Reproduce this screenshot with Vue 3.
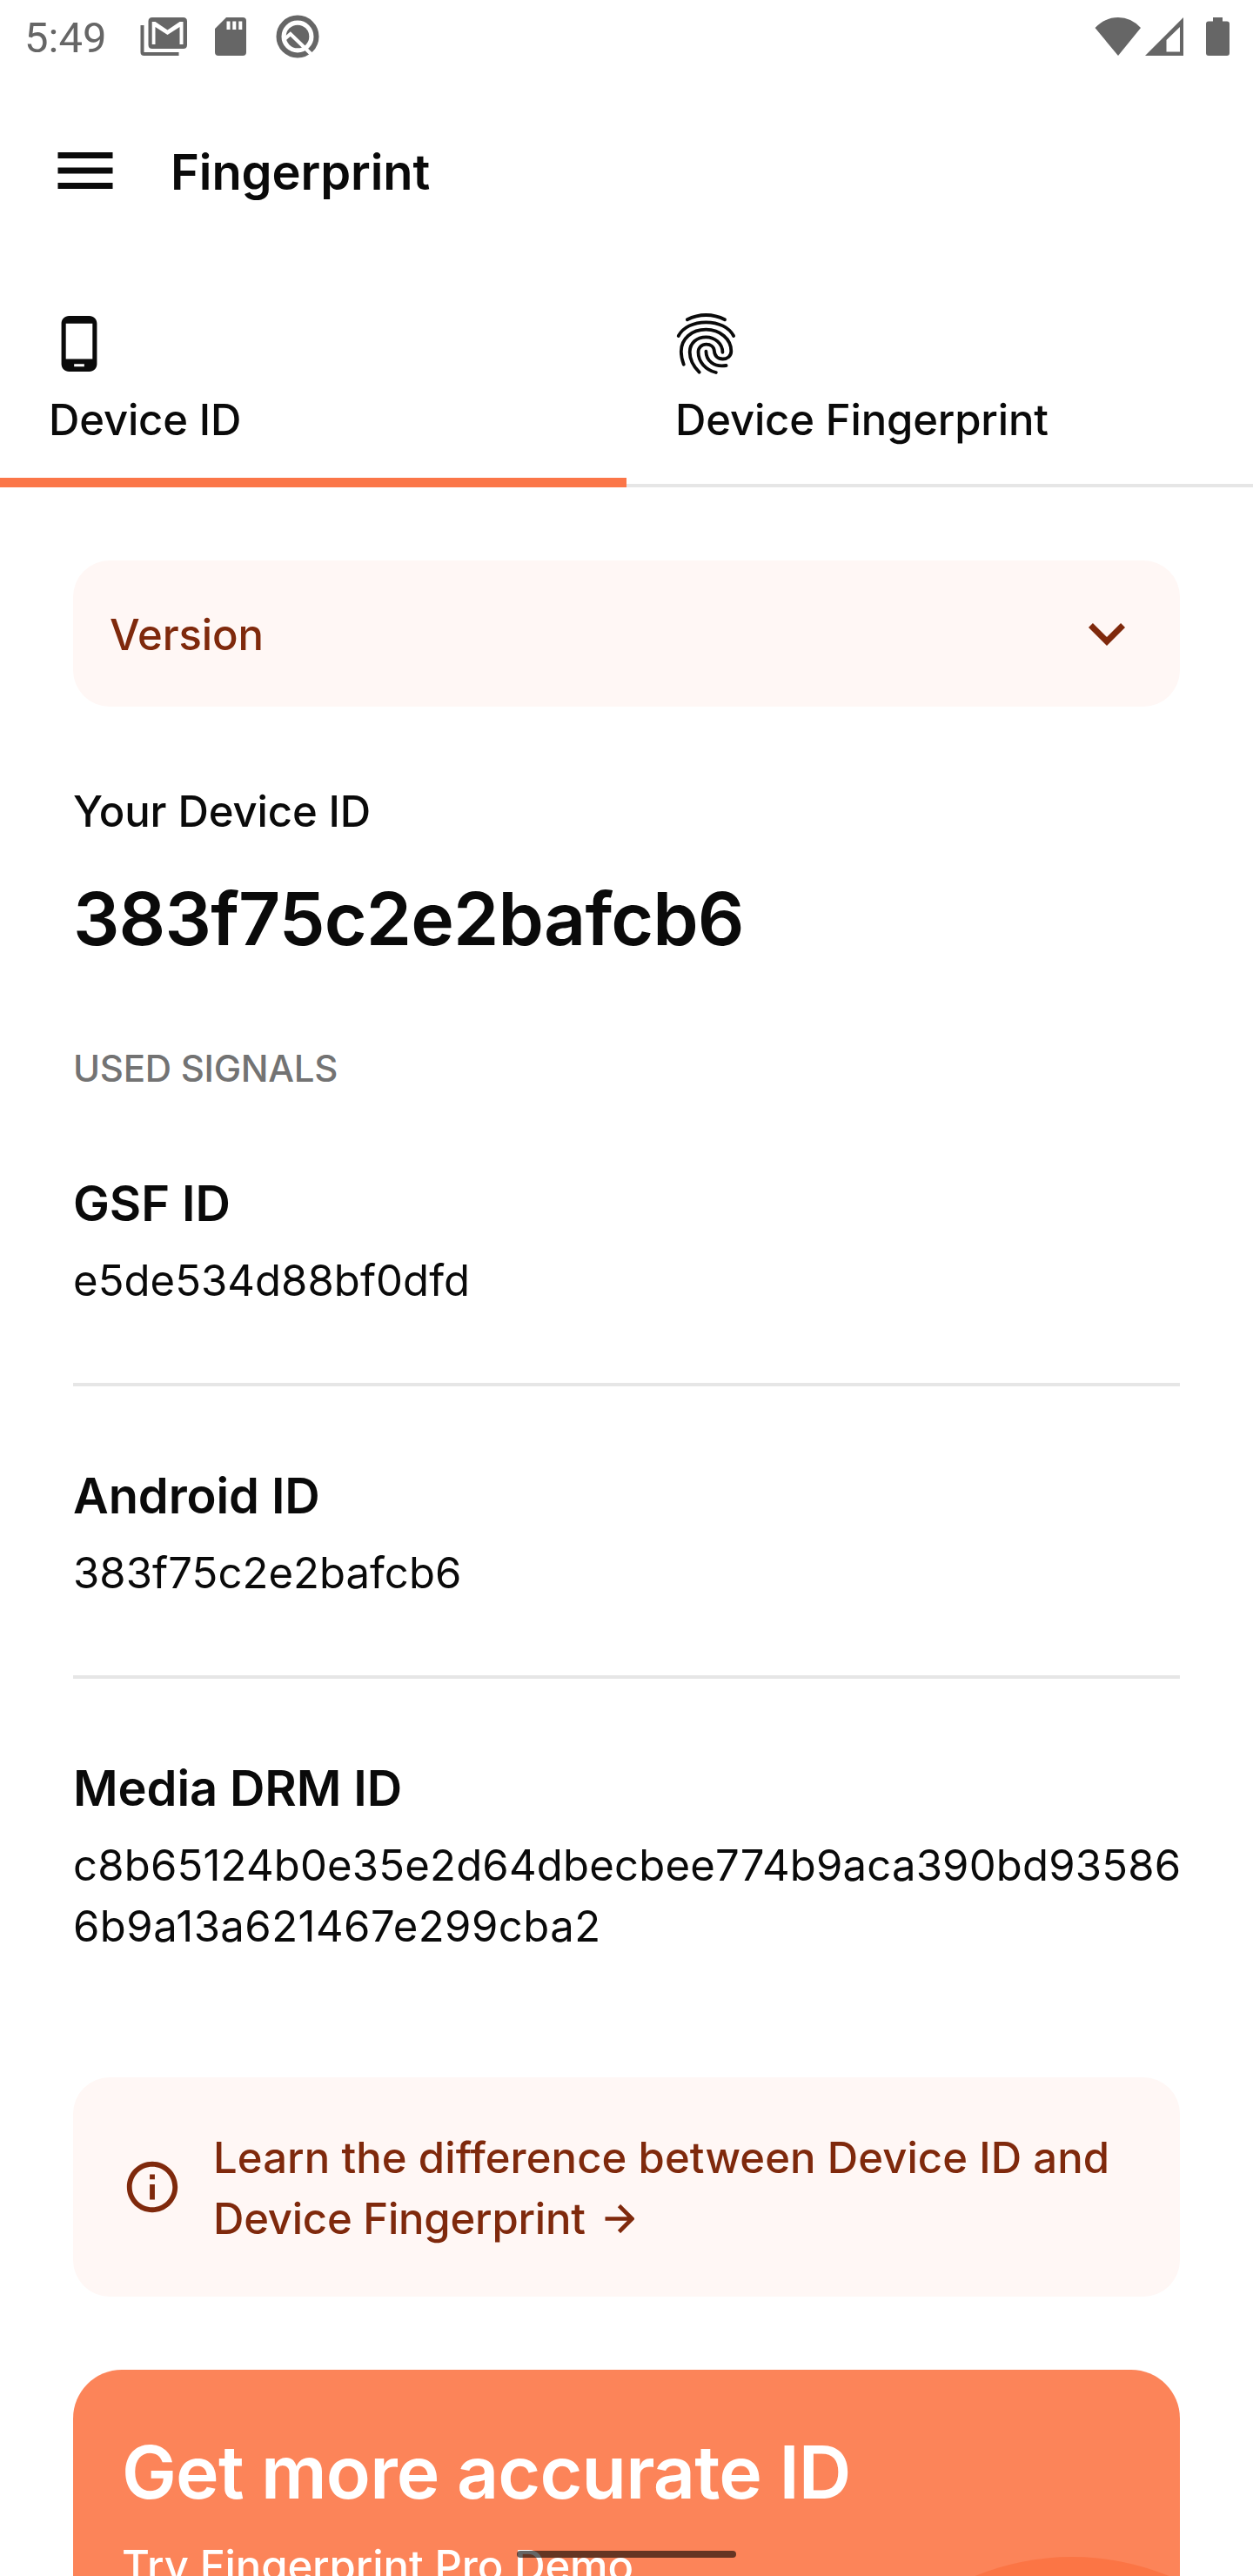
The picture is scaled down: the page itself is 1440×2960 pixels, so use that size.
<script setup>
const signals = [
  { name: 'GSF ID', lines: ['e5de534d88bf0dfd'] },
  { name: 'Android ID', lines: ['383f75c2e2bafcb6'] },
  { name: 'Media DRM ID', lines: ['c8b65124b0e35e2d64dbecbee774b9aca390bd93586', '6b9a13a621467e299cba2'] },
]
</script>

<template>
  <div class="screen">
    <div class="status">
      <span class="time">5:49</span>
      <svg class="s-mail" width="54" height="46" viewBox="0 0 54 46">
        <path fill-rule="evenodd" d="M14 1H49.500Q54 1 54 5.500V32.500Q54 37 49.500 37H14Q9.500 37 9.500 32.500V5.500Q9.500 1 14 1ZM13.700 32V6H17.500L31.500 15.500L45.500 6H49.500V32H45.500V12L31.500 21L17.500 12V32Z" />
        <path d="M0.500 10H4.500V41H44.500V45H4.500Q0.500 45 0.500 41Z" />
      </svg>
      <svg class="s-sd" width="38" height="46" viewBox="0 0 38 46">
        <path fill-rule="evenodd" d="M14 1H33Q37 1 37 5V41Q37 45 33 45H5Q1 45 1 41V14ZM14.500 5.500V15H18.500V5.500ZM21.300 5.500V15H25.300V5.500ZM28.300 5.500V15H32.300V5.500Z" />
      </svg>
      <svg class="s-q" width="50" height="50" viewBox="0 0 50 50">
        <circle cx="25" cy="25" r="21.500" fill="none" stroke="#666" stroke-width="6" />
        <circle cx="25" cy="25" r="13.300" />
        <path d="M10 28L16.800 22L41.500 46" fill="none" stroke="#fff" stroke-width="4.200" />
      </svg>
      <span class="grow"></span>
      <svg class="s-wifi" width="54" height="46" viewBox="0 0 54 46">
        <path d="M0.500 13Q12 1 27 1Q42 1 53 13L27 45Z" />
      </svg>
      <svg class="s-cell" width="46" height="46" viewBox="0 0 46 46">
        <path fill-rule="evenodd" d="M45 1V45H1ZM41 12L25.500 27V40.500H41Z" />
      </svg>
      <svg class="s-bat" width="28" height="46" viewBox="0 0 28 46">
        <path d="M9 1H20V5.500H25Q28 5.500 28 8.500V42Q28 45 25 45H4Q1 45 1 42V8.500Q1 5.500 4 5.500H9Z" />
      </svg>
    </div>

    <header class="toolbar">
      <svg class="menu" width="84" height="84" viewBox="0 0 24 24"><path d="M3 18h18v-2H3v2zm0-5h18v-2H3v2zm0-7v2h18V6H3z" /></svg>
      <h1>Fingerprint</h1>
    </header>

    <nav class="tabs">
      <div class="tab active">
        <svg width="70" height="70" viewBox="0 0 24 24">
          <path d="M16 1H8C6.340 1 5 2.340 5 4v16c0 1.660 1.340 3 3 3h8c1.660 0 3-1.340 3-3V4c0-1.660-1.340-3-3-3zM14 21h-4v-1h4v1zM17.250 18H6.750V4h10.500v14z" />
        </svg>
        <span>Device ID</span>
      </div>
      <div class="tab">
        <svg class="print" width="70" height="70" viewBox="0 0 70 70">
          <path d="M13.800 7.300Q24 2 35.400 2T57 7.300" />
          <path d="M3.700 26C9 16 21 10.300 35.400 10.300S61.800 16 67.100 26" />
          <path d="M9.700 58.700C7.700 53 6.800 49 6.800 44C6.800 29 19 18.700 35.400 18.700S64.300 30 64.300 43.500C64.300 49 60 52.500 54.700 52.500C49 52.500 45.300 49 44.900 43.500C44.600 38.500 40.500 35.700 35.700 35.700C30.500 35.700 26.500 39.500 26.500 44.500C26.500 56 35 65 46.800 68" />
          <path d="M27.600 67.700C20 60 16.700 53 16.700 44.500C16.700 34 25 27.300 35.400 27.300S54.400 35 54.400 44.800" />
          <path d="M35.400 43.700C35.500 54.500 44.500 62.300 58.600 60" />
        </svg>
        <span>Device Fingerprint</span>
      </div>
    </nav>

    <main>
      <div class="version">
        <span>Version</span>
        <svg width="84" height="84" viewBox="0 0 24 24"><path d="M16.590 8.590L12 13.170 7.410 8.590 6 10l6 6 6-6z" /></svg>
      </div>
      <p class="label">Your Device ID</p>
      <p class="device-id">383f75c2e2bafcb6</p>
      <p class="section">USED SIGNALS</p>
      <section v-for="s in signals" :key="s.name" class="signal">
        <h2>{{ s.name }}</h2>
        <p :class="{ wide: s.lines.length > 1 }"><span v-for="l in s.lines" :key="l">{{ l }}</span></p>
      </section>
      <div class="info">
        <svg width="70" height="70" viewBox="0 0 24 24">
          <path d="M11 7h2v2h-2zm0 4h2v6h-2zm1-9C6.480 2 2 6.480 2 12s4.480 10 10 10 10-4.480 10-10S17.520 2 12 2zm0 18c-4.410 0-8-3.590-8-8s3.590-8 8-8 8 3.590 8 8-3.590 8-8 8z" />
        </svg>
        <p>
          <span>Learn the difference between Device ID and</span>
          <span>Device Fingerprint<svg class="arrow" width="34" height="33" viewBox="0 0 34 33"><path d="M0.500 16.500H31M16.500 1.500L31.500 16.500L16.500 31.500" /></svg></span>
        </p>
      </div>
      <div class="promo">
        <h2>Get more accurate ID</h2>
        <p>Try Fingerprint Pro Demo</p>
        <div class="disc"></div>
      </div>
    </main>
    <div class="home-bar"></div>
  </div>
</template>

<style>
html, body { margin: 0; background: #fff; }
</style>

<style scoped>
.screen {
  position: relative;
  width: 1440px;
  height: 2960px;
  overflow: hidden;
  background: #fff;
  color: #0a0a0a;
  font-family: Inter, Roboto, sans-serif;
  font-size: 49px;
  line-height: 70px;
}
svg { display: block; flex: none; }
h1, h2, p { margin: 0; }
h1, h2 { font-size: 56px; font-weight: 600; line-height: 84px; letter-spacing: -0.1px; }
.status { display: flex; align-items: center; height: 84px; padding: 0 27px 0 28px; box-sizing: border-box; fill: #666; }
.time { width: 132.500px; color: #666; font: 400 49px/56px Roboto, sans-serif; padding-top: 4px; }
.s-sd { margin-left: 31px; }
.s-q { margin-left: 33px; }
.grow { flex: 1; }
.s-cell { margin-left: 3px; }
.s-bat { margin-left: 24px; }
.toolbar { display: flex; align-items: center; height: 196px; margin-top: 14px; padding-left: 56px; gap: 56px; box-sizing: border-box; }
.toolbar h1 { padding-top: 4px; }
.menu, .tab svg { fill: #0a0a0a; }
.tabs { display: flex; height: 266px; }
.tab { flex: 1; box-sizing: border-box; padding: 66px 56px 0; border-bottom: 4px solid #e6e6e6; font-weight: 500; letter-spacing: -0.16px; }
.tab.active { border-bottom: 11px solid #fb7648; }
.tab span { display: block; margin-top: 18px; }
.tab .print { fill: none; stroke: #0a0a0a; stroke-width: 3.800; stroke-linecap: round; }
main { padding: 84px 84px 0; }
.version { display: flex; align-items: center; justify-content: space-between; height: 168px; box-sizing: border-box; padding: 0 42px; border-radius: 42px; background: #fff7f5; color: #7f290c; fill: #7f290c; font-weight: 500; letter-spacing: -0.12px; }
.version span { padding-top: 4px; }
.label { margin-top: 86px; font-weight: 500; letter-spacing: -0.1px; }
.device-id { margin-top: 32px; font-size: 84px; line-height: 112px; font-weight: 600; letter-spacing: -0.84px; }
.section { margin: 88px 0 1px; font-size: 42px; line-height: 56px; font-weight: 500; color: #737373; letter-spacing: -0.28px; }
.signal { padding: 84px 0 82px; border-bottom: 4px solid #e6e6e6; }
.signal p { margin-top: 12px; letter-spacing: 0.06px; }
.signal p span, .info p span { display: block; }
.signal .wide span { letter-spacing: 0.2px; white-space: nowrap; }
.signal .wide span + span { letter-spacing: 0.47px; }
.signal:last-of-type { border: 0; padding-bottom: 138px; }
.info { display: flex; align-items: center; height: 252px; box-sizing: border-box; padding-left: 56px; gap: 35px; border-radius: 42px; background: #fff7f5; color: #7f290c; fill: #7f290c; font-weight: 500; }
.info p { padding-top: 4px; letter-spacing: 0.09px; white-space: nowrap; }
.info p span + span { letter-spacing: -0.22px; }
.info .arrow { display: inline-block; margin-left: 22px; vertical-align: 1px; fill: none; stroke: #7f290c; stroke-width: 4.600; }
.promo { position: relative; overflow: hidden; height: 560px; margin-top: 84px; padding: 62px 56px 0; box-sizing: border-box; border-radius: 56px; background: #fc8459; color: #fff; }
.promo h2 { font-size: 84px; line-height: 112px; letter-spacing: -0.84px; }
.promo p { position: relative; z-index: 1; margin-top: 17px; font-weight: 500; letter-spacing: -0.1px; }
.disc { position: absolute; top: 215px; left: 854px; width: 588px; height: 588px; border-radius: 50%; background: #fb7545; }
.home-bar { position: absolute; z-index: 2; left: 594px; top: 2931px; width: 252px; height: 8px; border-radius: 4px; background: rgba(0, 0, 0, 0.6); }
</style>
